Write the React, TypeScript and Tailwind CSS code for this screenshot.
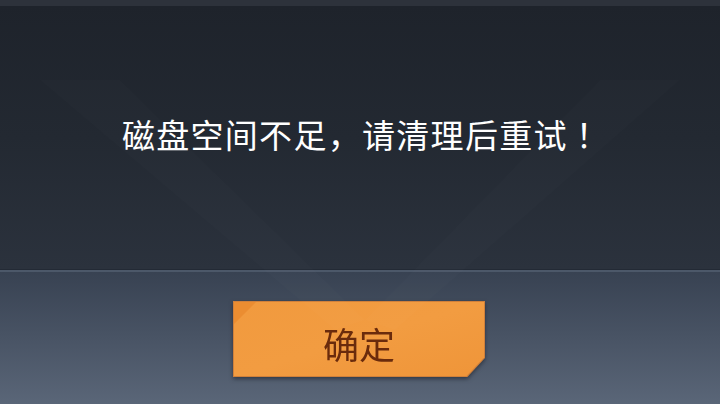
import React from 'react'

const cjk = { fontFamily: '"Noto Sans CJK SC", "Noto Sans", sans-serif' }

function Chevron() {
  // faint V shape painted into the backdrop
  return (
    <svg className="pointer-events-none absolute inset-0" width="720" height="404" viewBox="0 0 720 404">
      <polygon points="40,80 120,80 365,320 335,330" fill="#ffffff" opacity="0.012" />
      <polygon points="680,80 600,80 365,320 395,330" fill="#ffffff" opacity="0.012" />
    </svg>
  )
}

function ConfirmButton() {
  return (
    <div className="[filter:drop-shadow(0_2px_2px_rgba(20,24,32,0.55))]">
      <div className="w-[252px] h-[76px] bg-[#d0803a] p-px [clip-path:polygon(0_0,100%_0,100%_75%,93%_100%,0_100%)]">
        <div className="relative flex h-full w-full items-center justify-center bg-gradient-to-br from-[#f19a3e] via-[#f29c41] to-[#ef9539] [clip-path:polygon(0_0,100%_0,100%_75%,93%_100%,0_100%)]">
          <div className="absolute left-0 top-0 h-[22px] w-[22px] bg-[#e8882c] [clip-path:polygon(0_0,100%_0,0_100%)] opacity-70" />
          <span className="relative mt-[8px] text-[36px] leading-none text-[#6a2b0c]" style={cjk}>
            确定
          </span>
        </div>
      </div>
    </div>
  )
}

export default function App() {
  return (
    <div className="relative flex h-[404px] w-[720px] flex-col overflow-hidden bg-[#1f242c]">
      {/* top strip */}
      <div className="h-[6px] bg-[#2d323b]" />

      {/* message panel */}
      <div className="relative flex h-[263px] items-start justify-center bg-gradient-to-b from-[#1e232b] via-[#232932] to-[#2b323d] pt-[112px]">
        <p className="flex text-[33px] leading-none tracking-[1.3px] text-white" style={cjk}>
          <span>磁盘空间不足，请清理后重试</span>
          <span className="ml-[8px] mr-[-12px]">！</span>
        </p>
      </div>

      {/* divider */}
      <div className="h-px bg-[#232a35]" />
      <div className="h-[2px] bg-[#4c5869]" />

      {/* button panel */}
      <div className="flex flex-1 justify-center bg-gradient-to-b from-[#384252] to-[#5a6678] pt-[29px]">
        <div className="ml-[-2px]">
          <ConfirmButton />
        </div>
      </div>

      <Chevron />
    </div>
  )
}
